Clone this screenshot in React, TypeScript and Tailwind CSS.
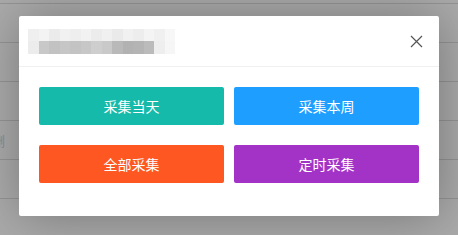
import React from "react";

const rows = [0, 1, 2, 3, 4, 5];

const blurTop = ["#efefef", "#f3f3f3", "#ebebeb", "#f1f1f1", "#eeeeee", "#f2f2f2", "#ececec", "#f0f0f0", "#eaeaea", "#f1f1f1", "#ededed", "#f4f4f4", "#f0f0f0", "#f7f7f7"];
const blurBottom = ["#ececec", "#c8c8c8", "#c2c2c2", "#c6c6c6", "#c3c3c3", "#c7c7c7", "#cecece", "#c9c9c9", "#b9b9b9", "#b2b2b2", "#b4b4b4", "#bbbbbb", "#eeeeee", "#f6f6f6"];

const actions = [
  { label: "采集当天", color: "bg-[#16baaa]" },
  { label: "采集本周", color: "bg-[#1e9fff]" },
  { label: "全部采集", color: "bg-[#ff5722]" },
  { label: "定时采集", color: "bg-[#a233c6]" },
];

export default function App() {
  return (
    <div
      className="relative w-[458px] h-[235px] overflow-hidden bg-[#aaaaaa]"
      style={{ fontFamily: '"Noto Sans CJK SC", "Noto Sans", sans-serif' }}
    >
      {/* page behind the overlay */}
      <div className="flex flex-col pt-[3px]">
        {rows.map((r) => (
          <div key={r} className="h-[39px] border-t border-[#949494] text-[13px] text-[#8a8a8a] leading-[39px]">
            {r === 3 ? <span className="-ml-[8px]">删</span> : null}
          </div>
        ))}
      </div>

      {/* dialog */}
      <div className="absolute left-[19px] top-[16px] w-[420px] h-[200px] bg-white rounded-[2px] shadow-[1px_1px_50px_rgba(0,0,0,0.3)] flex flex-col">
        <div className="h-[51px] border-b border-[#f0f0f0] flex items-center justify-between pl-[9px] pr-[16px]">
          <div className="flex flex-col">
            <div className="flex h-[12px]">
              {blurTop.map((c, i) => (
                <div key={i} className="w-[10.5px] h-full" style={{ background: c }} />
              ))}
            </div>
            <div className="flex h-[13px]">
              {blurBottom.map((c, i) => (
                <div key={i} className="w-[10.5px] h-full" style={{ background: c }} />
              ))}
            </div>
          </div>
          <svg width="13" height="13" viewBox="0 0 13 13" className="text-[#555]">
            <path d="M1 1L12 12M12 1L1 12" stroke="currentColor" strokeWidth="1.2" fill="none" />
          </svg>
        </div>
        <div className="grid grid-cols-2 gap-x-[10px] gap-y-[20px] px-[20px] pt-[20px]">
          {actions.map((a) => (
            <button
              key={a.label}
              className={`${a.color} h-[38px] rounded-[2px] text-white text-[14px] flex items-center justify-center`}
            >
              {a.label}
            </button>
          ))}
        </div>
      </div>
    </div>
  );
}
